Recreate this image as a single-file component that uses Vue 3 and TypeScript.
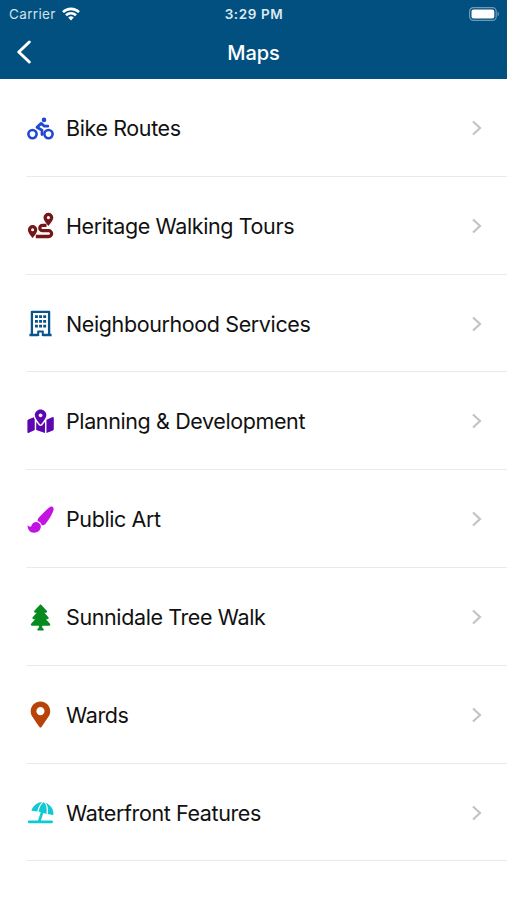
<script setup lang="ts">
interface MapItem {
  label: string
  icon: string
  color: string
}

const items: MapItem[] = [
  { label: 'Bike Routes', icon: 'bike', color: '#2148cf' },
  { label: 'Heritage Walking Tours', icon: 'route', color: '#741719' },
  { label: 'Neighbourhood Services', icon: 'building', color: '#07558a' },
  { label: 'Planning & Development', icon: 'map', color: '#5c05b0' },
  { label: 'Public Art', icon: 'brush', color: '#c313e2' },
  { label: 'Sunnidale Tree Walk', icon: 'tree', color: '#078a20' },
  { label: 'Wards', icon: 'pin', color: '#b8430a' },
  { label: 'Waterfront Features', icon: 'beach', color: '#10c9d2' },
]
</script>

<template>
  <div class="screen">
    <header class="header">
      <div class="status">
        <div class="carrier">
          <span>Carrier</span>
          <svg class="wifi" viewBox="0 0 18 14" fill="none" stroke="#fff" stroke-width="2.6">
            <path d="M1 5.1a11.6 11.6 0 0 1 16 0" />
            <path d="M4 8.3a7.2 7.2 0 0 1 10 0" />
            <path d="M9 13.4 6.2 10.6a4 4 0 0 1 5.6 0z" fill="#fff" stroke="none" />
          </svg>
        </div>
        <span class="time">3:29 PM</span>
        <svg class="battery" viewBox="0 0 31 14">
          <rect x=".6" y=".6" width="26.6" height="12.8" rx="3.8" fill="none" stroke="#6f9bb8" stroke-width="1.2" />
          <rect x="2.5" y="2.5" width="22.8" height="9" rx="2" fill="#fff" />
          <path d="M28.6 4.8c1.8.6 1.8 3.8 0 4.4z" fill="#6f9bb8" />
        </svg>
      </div>
      <nav class="nav">
        <svg class="back" viewBox="0 0 16 24">
          <path d="M13.3 2 2.8 12l10.5 10" fill="none" stroke="#fff" stroke-width="3" stroke-linecap="round" stroke-linejoin="round" />
        </svg>
        <h1>Maps</h1>
      </nav>
    </header>

    <ul class="list">
      <li v-for="item in items" :key="item.label" class="row">
        <svg class="icon" viewBox="0 0 27 27" :style="{ color: item.color }">
          <g v-if="item.icon === 'bike'" fill="none" stroke="currentColor" stroke-width="2.6">
            <circle cx="5.5" cy="19.1" r="4.1" />
            <circle cx="21.5" cy="19.1" r="4.1" />
            <circle cx="17" cy="4.900" r="2.3" fill="currentColor" stroke="none" />
            <path d="M20.8 11.2h-3.4l-3.200-2.800-4.200 3.800 5 3v4.400" stroke-width="2.800" stroke-linecap="round" stroke-linejoin="round" />
          </g>
          <g v-else-if="item.icon === 'route'" fill="currentColor">
            <path d="M19.500 13.300h-4a2.700 2.700 0 0 0 0 5.400h6.200a2.900 2.900 0 0 1 0 5.800H8.800" fill="none" stroke="currentColor" stroke-width="3.300" />
            <path fill-rule="evenodd" d="M21.4.7a4.9 4.9 0 0 1 4.9 4.9c0 2.7-3.2 6.5-4.9 8.4-1.7-1.9-4.9-5.7-4.9-8.4A4.9 4.9 0 0 1 21.4.7zm0 3.300a1.600 1.600 0 1 0 0 3.200 1.600 1.600 0 0 0 0-3.200z" />
            <path fill-rule="evenodd" d="M5.6 13.1a4.700 4.700 0 0 1 4.700 4.700c0 2.700-3 6.400-4.700 8.200-1.700-1.800-4.700-5.500-4.700-8.200a4.700 4.700 0 0 1 4.700-4.700zm0 3.200a1.500 1.500 0 1 0 0 3 1.500 1.500 0 0 0 0-3z" />
          </g>
          <g v-else-if="item.icon === 'building'" fill="currentColor">
            <path d="M4.9 25V1.8h17.2V25M2.4 25h8.8M15.8 25h8.8" fill="none" stroke="currentColor" stroke-width="2.3" stroke-linejoin="round" />
            <path d="M8 5.300h2.900v2.700H8zM12.100 5.300H15v2.700h-2.900zM16.200 5.300h2.900v2.700h-2.900zM8 10h2.900v2.700H8zM12.100 10H15v2.700h-2.900zM16.200 10h2.900v2.700h-2.900zM8 14.700h2.900v2.700H8zM12.100 14.700H15v2.700h-2.900zM16.200 14.700h2.900v2.700h-2.900zM10.200 26v-4.700q0-.8.8-.8h5q.8 0 .8.8V26h-2v-3.400h-2.600V26z" />
          </g>
          <g v-else-if="item.icon === 'map'" fill="currentColor" transform="translate(.4 1.600) scale(.0458)">
            <path d="M288 0c-69.59 0-126 56.41-126 126 0 56.26 82.35 158.8 113.9 196.02 6.39 7.54 17.82 7.54 24.2 0C331.65 284.8 414 182.26 414 126 414 56.41 357.59 0 288 0zm0 168c-23.2 0-42-18.8-42-42s18.8-42 42-42 42 18.8 42 42-18.8 42-42 42zM20.12 215.95A32.006 32.006 0 0 0 0 245.66v250.32c0 11.32 11.43 19.06 21.94 14.86L160 448V214.92c-8.84-15.98-16.07-31.54-21.25-46.42L20.12 215.95zM288 359.67c-14.07 0-27.38-6.18-36.51-16.96-19.66-23.2-40.57-49.62-59.49-76.72v182l192 64V266c-18.92 27.09-39.82 53.52-59.49 76.72-9.13 10.77-22.44 16.95-36.51 16.95zm266.06-198.51L416 224v288l139.88-55.95A31.996 31.996 0 0 0 576 426.34V176.02c0-11.32-11.43-19.06-21.94-14.86z" />
          </g>
          <g v-else-if="item.icon === 'brush'" fill="currentColor">
            <path d="M24 .6c1.800-.2 2.900 1.200 2.600 2.800-.7 3.600-5 10.700-8 14.400-1 1.200-2.400 1.700-3.900 1.400-.6-2.200-1.900-3.500-4.100-4.200-.1-1.400.4-2.500 1.500-3.700C15.400 7.800 20.900 2 24 .6z" />
            <path d="M9.300 16.100c2.600.2 4.400 2 4.600 4.500-.3 3.900-3.100 6.200-6.900 6.200-4.300 0-6.300-3.300-6.400-7.500.7.500 2 1.500 2.700 1.400.5 0 .8-.3 1-.7.900-2.700 2.500-3.900 5-3.900z" />
          </g>
          <path v-else-if="item.icon === 'tree'" fill="currentColor" transform="translate(3.800 .5) scale(.0508)" d="M378.31 378.49L298.42 288h30.63c9.01 0 16.98-5 20.78-13.06 3.8-8.04 2.55-17.26-3.28-24.05L268.42 160h28.89c9.1 0 17.3-5.35 20.86-13.61 3.52-8.13 1.86-17.59-4.24-24.08L203.66 4.83c-6.03-6.45-17.28-6.45-23.32 0L70.06 122.31c-6.1 6.49-7.75 15.95-4.24 24.08C69.38 154.65 77.59 160 86.69 160h28.89l-78.14 90.91c-5.81 6.78-7.06 15.99-3.27 24.04C37.97 283 45.93 288 54.95 288h30.63L5.69 378.49c-6 6.79-7.36 16.09-3.56 24.26C5.87 410.77 13.87 416 22.94 416H160v38l-31 35q-9 23 14 23h98q23 0 14-23l-31-35v-38h137.060c9.070 0 17.070-5.230 20.810-13.250 3.800-8.170 2.440-17.470-3.560-24.260z" />
          <path v-else-if="item.icon === 'pin'" fill="currentColor" transform="translate(3.700 .4) scale(.0508)" d="M172.268 501.67C26.97 291.031 0 269.413 0 192 0 85.961 85.961 0 192 0s192 85.961 192 192c0 77.413-26.97 99.031-172.268 309.67-9.535 13.774-29.93 13.773-39.464 0zM192 272c44.183 0 80-35.817 80-80s-35.817-80-80-80-80 35.817-80 80 35.817 80 80 80z" />
          <g v-else fill="currentColor">
            <path d="M2.200 22.900h22.400M15.200 13.200l-3 9.200" fill="none" stroke="currentColor" stroke-width="2.700" stroke-linecap="round" />
            <path d="M4.500 10.900C7 6 11.200 3.100 15.200 3.100c-2.300 2.100-4 5.200-4.900 9.300l-5.200-.6q-.9-.2-.6-.9zM16.300 3.200c2.700.9 3.900 5.200 3.200 11.700l-8-2.300c1-4.300 2.600-7.500 4.800-9.400zM18.600 3.700c4.800 2 8.100 6.400 7.900 11.400q-.1 1-1 .8l-4.700-.8c.6-5.200-.1-9.100-2.200-11.400z" />
          </g>
        </svg>
        <span class="label">{{ item.label }}</span>
        <svg class="chevron" viewBox="0 0 12 16">
          <path d="M2 1.500 9 8l-7 6.500" fill="none" stroke="#c3c3c5" stroke-width="2.200" />
        </svg>
      </li>
    </ul>
  </div>
</template>

<style>
body {
  margin: 0;
  background: #fff;
}
</style>

<style scoped>
.screen {
  width: 100%;
  height: 900px;
  overflow: hidden;
  background: #fff;
  font-family: Inter, "Liberation Sans", sans-serif;
}
.header {
  box-sizing: border-box;
  height: 79px;
  background: #02507f;
  color: #fff;
}
.status {
  display: grid;
  grid-template-columns: 1fr auto 1fr;
  align-items: center;
  height: 27px;
  padding: 0 7px 0 9px;
  font-size: 13.5px;
}
.carrier {
  display: flex;
  align-items: center;
  gap: 6px;
  color: #d3e1ea;
  letter-spacing: 0.35px;
}
.wifi {
  width: 18px;
  height: 14px;
}
.time {
  font-weight: 600;
  letter-spacing: 0.6px;
  margin-right: 1px;
  color: #dce8f0;
}
.battery {
  width: 31px;
  height: 14px;
  justify-self: end;
}
.nav {
  display: grid;
  grid-template-columns: 1fr auto 1fr;
  align-items: center;
  height: 50px;
  padding: 0 16px;
}
.back {
  width: 16px;
  height: 24px;
}
h1 {
  margin: 0;
  padding-top: 1px;
  font-size: 20px;
  font-weight: 550;
}
.list {
  margin: 0;
  padding: 0 0 0 26px;
  list-style: none;
}
.row {
  display: flex;
  align-items: center;
  box-sizing: border-box;
  height: 97.8px;
  padding: 1.4px 24px 0 1px;
  border-bottom: 1px solid #eaeaeb;
}
.icon {
  width: 27px;
  height: 27px;
  margin-right: 12px;
}
.label {
  flex: 1;
  font-size: 21.5px;
  letter-spacing: -0.39px;
  color: #111;
  white-space: nowrap;
}
.chevron {
  width: 12px;
  height: 16px;
}
</style>
